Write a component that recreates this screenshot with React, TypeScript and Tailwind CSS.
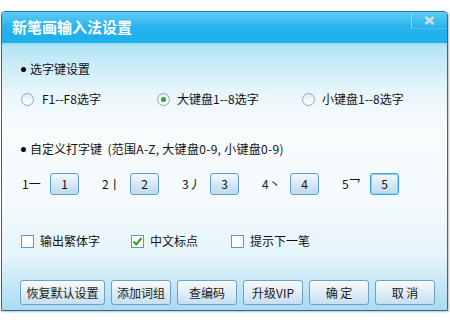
import React from "react";

const font = { fontFamily: '"Noto Sans CJK SC", "Noto Sans", sans-serif' };

function Radio({ checked }: { checked?: boolean }) {
  return (
    <span className="relative inline-flex w-[13px] h-[13px] rounded-full border border-[#8ea6c6] bg-gradient-to-b from-[#e6ecf4] to-white items-center justify-center">
      {checked && <span className="w-[5px] h-[5px] rounded-full bg-[#3da22a]" />}
    </span>
  );
}

function Check({ checked }: { checked?: boolean }) {
  return (
    <span className="relative inline-flex w-[13px] h-[13px] border border-[#4f9bd4] bg-white items-center justify-center">
      {checked && (
        <svg width="11" height="11" viewBox="0 0 11 11">
          <path d="M1.5 5.5 L4.2 8.5 L9.5 2" stroke="#3a9a1e" strokeWidth="2" fill="none" />
        </svg>
      )}
    </span>
  );
}

function KeyBox({ v, focused }: { v: string; focused?: boolean }) {
  return (
    <span
      className={
        "inline-flex w-[29px] h-[22px] items-center justify-center rounded-[3px] bg-gradient-to-b from-[#f2f8fd] to-[#bcd9ee] text-[12px] text-[#111] " +
        (focused ? "border border-[#2ea4ee] shadow-[inset_0_0_0_1px_#8fd0f8]" : "border border-[#5c9fcf]")
      }
    >
      {v}
    </span>
  );
}

function Btn({ w, children }: { w: string; children: React.ReactNode }) {
  return (
    <span
      className={
        "inline-flex h-[25px] items-center justify-center rounded-[3px] border border-[#6e9fc4] bg-gradient-to-b from-[#f8fbfd] to-[#c6dff0] text-[12px] text-[#1a1a1a] " +
        w
      }
    >
      {children}
    </span>
  );
}

export default function App() {
  return (
    <div className="w-[450px] h-[325px] bg-white pt-[11px] pl-[1px]" style={font}>
      <div className="w-[447px] h-[300px] border border-[#25709e] rounded-t-[4px] flex flex-col overflow-hidden shadow-[1px_1px_2px_rgba(0,0,0,0.25)]">
        <div className="h-[31px] flex bg-gradient-to-b from-[#5ccbf5] via-[#27b3ee] to-[#1daeea]">
          <div className="flex-1 pl-[10px] pt-[6px] text-[15px] font-bold text-white leading-[18px]">
            新笔画输入法设置
          </div>
          <div className="w-[36px] h-[17px] border-l border-[#8fd6f5] border-b border-b-[#4cc0f0] flex items-center justify-center">
            <svg width="11" height="9" viewBox="0 0 11 9">
              <path d="M1.5 1 L9.5 8 M9.5 1 L1.5 8" stroke="#d6dde3" strokeWidth="2.4" />
            </svg>
          </div>
        </div>
        <div className="h-[2px] bg-[#9ddcf3]" />
        <div className="flex-1 flex flex-col bg-[linear-gradient(to_bottom,#b3e4f4_0%,#e8f6fb_18%,#f9fcfd_32%,#f4fafd_60%,#e4f4fa_80%,#a8dcf2_100%)] text-[12px] text-[#111] pl-[19px]">
          <div className="mt-[16px] h-[16px] flex items-center gap-[4px] leading-[16px]">
            <span className="w-[5px] h-[5px] rounded-full bg-black" />
            <span>选字键设置</span>
          </div>
          <div className="mt-[14px] h-[16px] flex items-center">
            <div className="w-[136px] flex items-center gap-[8px]">
              <Radio />
              <span>F1--F8选字</span>
            </div>
            <div className="w-[145px] flex items-center gap-[7px]">
              <Radio checked />
              <span>大键盘1--8选字</span>
            </div>
            <div className="flex items-center gap-[7px]">
              <Radio />
              <span>小键盘1--8选字</span>
            </div>
          </div>
          <div className="mt-[34px] h-[16px] flex items-center gap-[4px]">
            <span className="w-[5px] h-[5px] rounded-full bg-black" />
            <span>
              自定义打字键&nbsp;&nbsp;<span className="tracking-[0.3px]">(范围A-Z, 大键盘0-9, 小键盘0-9)</span>
            </span>
          </div>
          <div className="mt-[16px] h-[22px] flex items-center pl-[1px]">
            {[
              ["1一", "1"],
              ["2丨", "2"],
              ["3丿", "3"],
              ["4丶", "4"],
              ["5乛", "5"],
            ].map(([l, v], i) => (
              <div key={i} className="w-[80px] flex items-center">
                <span className="w-[28px]">{l}</span>
                <KeyBox v={v} focused={i === 4} />
              </div>
            ))}
          </div>
          <div className="mt-[38px] h-[16px] flex items-center">
            <div className="w-[110px] flex items-center gap-[6px]">
              <Check />
              <span>输出繁体字</span>
            </div>
            <div className="w-[100px] flex items-center gap-[6px]">
              <Check checked />
              <span>中文标点</span>
            </div>
            <div className="flex items-center gap-[6px]">
              <Check />
              <span>提示下一笔</span>
            </div>
          </div>
          <div className="mt-[31px] flex gap-[6px] -ml-[1px]">
            <Btn w="w-[85px]">恢复默认设置</Btn>
            <Btn w="w-[60px]">添加词组</Btn>
            <Btn w="w-[60px]">查编码</Btn>
            <Btn w="w-[60px]">升级VIP</Btn>
            <Btn w="w-[60px]">确&nbsp;定</Btn>
            <Btn w="w-[60px]">取&nbsp;消</Btn>
          </div>
        </div>
      </div>
    </div>
  );
}
